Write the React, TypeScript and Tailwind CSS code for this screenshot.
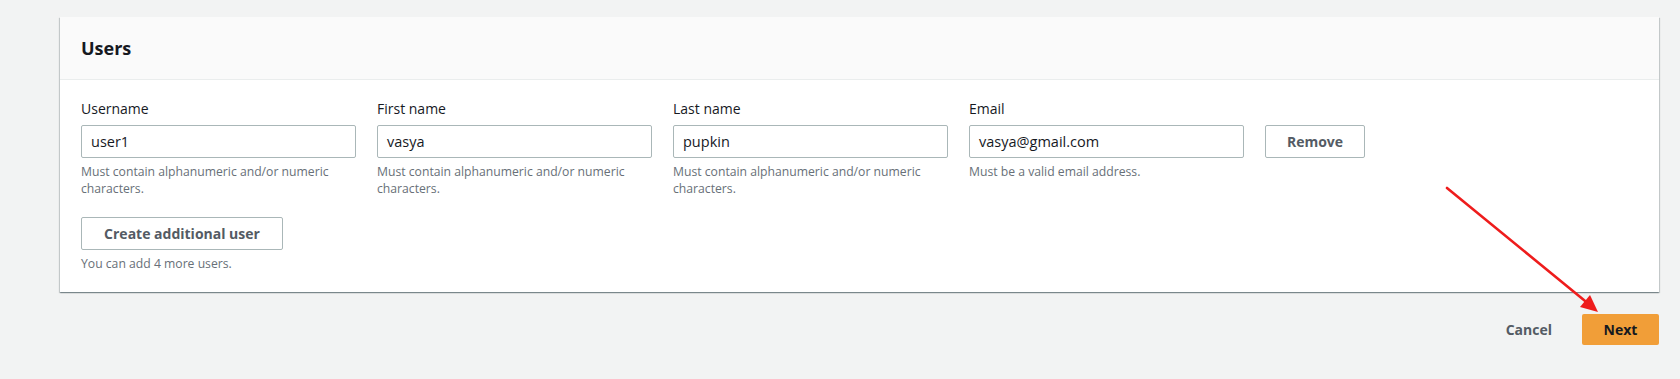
const fields = [
  { label: 'Username', value: 'user1', hint: 'Must contain alphanumeric and/or numeric characters.' },
  { label: 'First name', value: 'vasya', hint: 'Must contain alphanumeric and/or numeric characters.' },
  { label: 'Last name', value: 'pupkin', hint: 'Must contain alphanumeric and/or numeric characters.' },
  { label: 'Email', value: 'vasya@gmail.com', hint: 'Must be a valid email address.' },
];

function Field({ label, value, hint }: { label: string; value: string; hint: string }) {
  return (
    <div className="w-[275px]">
      <div className="text-[14px] leading-[22px] text-[#16191f]">{label}</div>
      <div className="mt-[5px] h-[33px] rounded-[2px] border border-[#aab7b8] bg-white px-[9px] flex items-center text-[14.5px] text-[#16191f]">
        {value}
      </div>
      <div className="mt-[5px] text-[12.2px] leading-[17px] text-[#687078] pr-[16px]">{hint}</div>
    </div>
  );
}

export default function App() {
  return (
    <div className="relative min-h-[379px] bg-[#f2f3f3] pl-[60px] pr-[21px] pt-[17px] font-['Open_Sans',sans-serif]">
      {/* Users card */}
      <div className="w-[1599px] bg-white shadow-[0_1px_1px_0_rgba(0,28,36,0.3),1px_1px_1px_0_rgba(0,28,36,0.15),-1px_1px_1px_0_rgba(0,28,36,0.15)]">
        <div className="h-[63px] bg-[#fafafa] border-b border-[#eaeded] px-[21px] flex items-center">
          <h2 className="text-[18px] font-bold text-[#16191f]">Users</h2>
        </div>
        <div className="px-[21px] pt-[18px] pb-[20px]">
          <div className="flex gap-[21px] items-start">
            {fields.map((f) => (
              <Field key={f.label} {...f} />
            ))}
            <button className="mt-[27px] h-[33px] w-[100px] rounded-[2px] border border-[#aab7b8] bg-white text-[14px] font-bold text-[#545b64]">
              Remove
            </button>
          </div>
          <button className="mt-[20px] h-[33px] w-[202px] rounded-[2px] border border-[#aab7b8] bg-white text-[14px] font-bold text-[#545b64]">
            Create additional user
          </button>
          <div className="mt-[5px] text-[12.2px] leading-[17px] text-[#687078]">You can add 4 more users.</div>
        </div>
      </div>

      {/* Footer actions */}
      <div className="w-[1599px] mt-[22px] flex justify-end items-center gap-[30px]">
        <button className="text-[14px] font-bold text-[#545b64]">Cancel</button>
        <button className="h-[31px] w-[77px] rounded-[2px] bg-[#f19e38] text-[14px] font-bold text-[#16191f]">
          Next
        </button>
      </div>

      {/* Annotation arrow */}
      <svg className="absolute left-0 top-0 pointer-events-none" width="1680" height="379">
        <line x1="1447" y1="188" x2="1590" y2="305" stroke="#ee1c1c" strokeWidth="2.6" strokeLinecap="round" />
        <polygon points="1598,312 1580,307 1590,295" fill="#ee1c1c" />
      </svg>
    </div>
  );
}
